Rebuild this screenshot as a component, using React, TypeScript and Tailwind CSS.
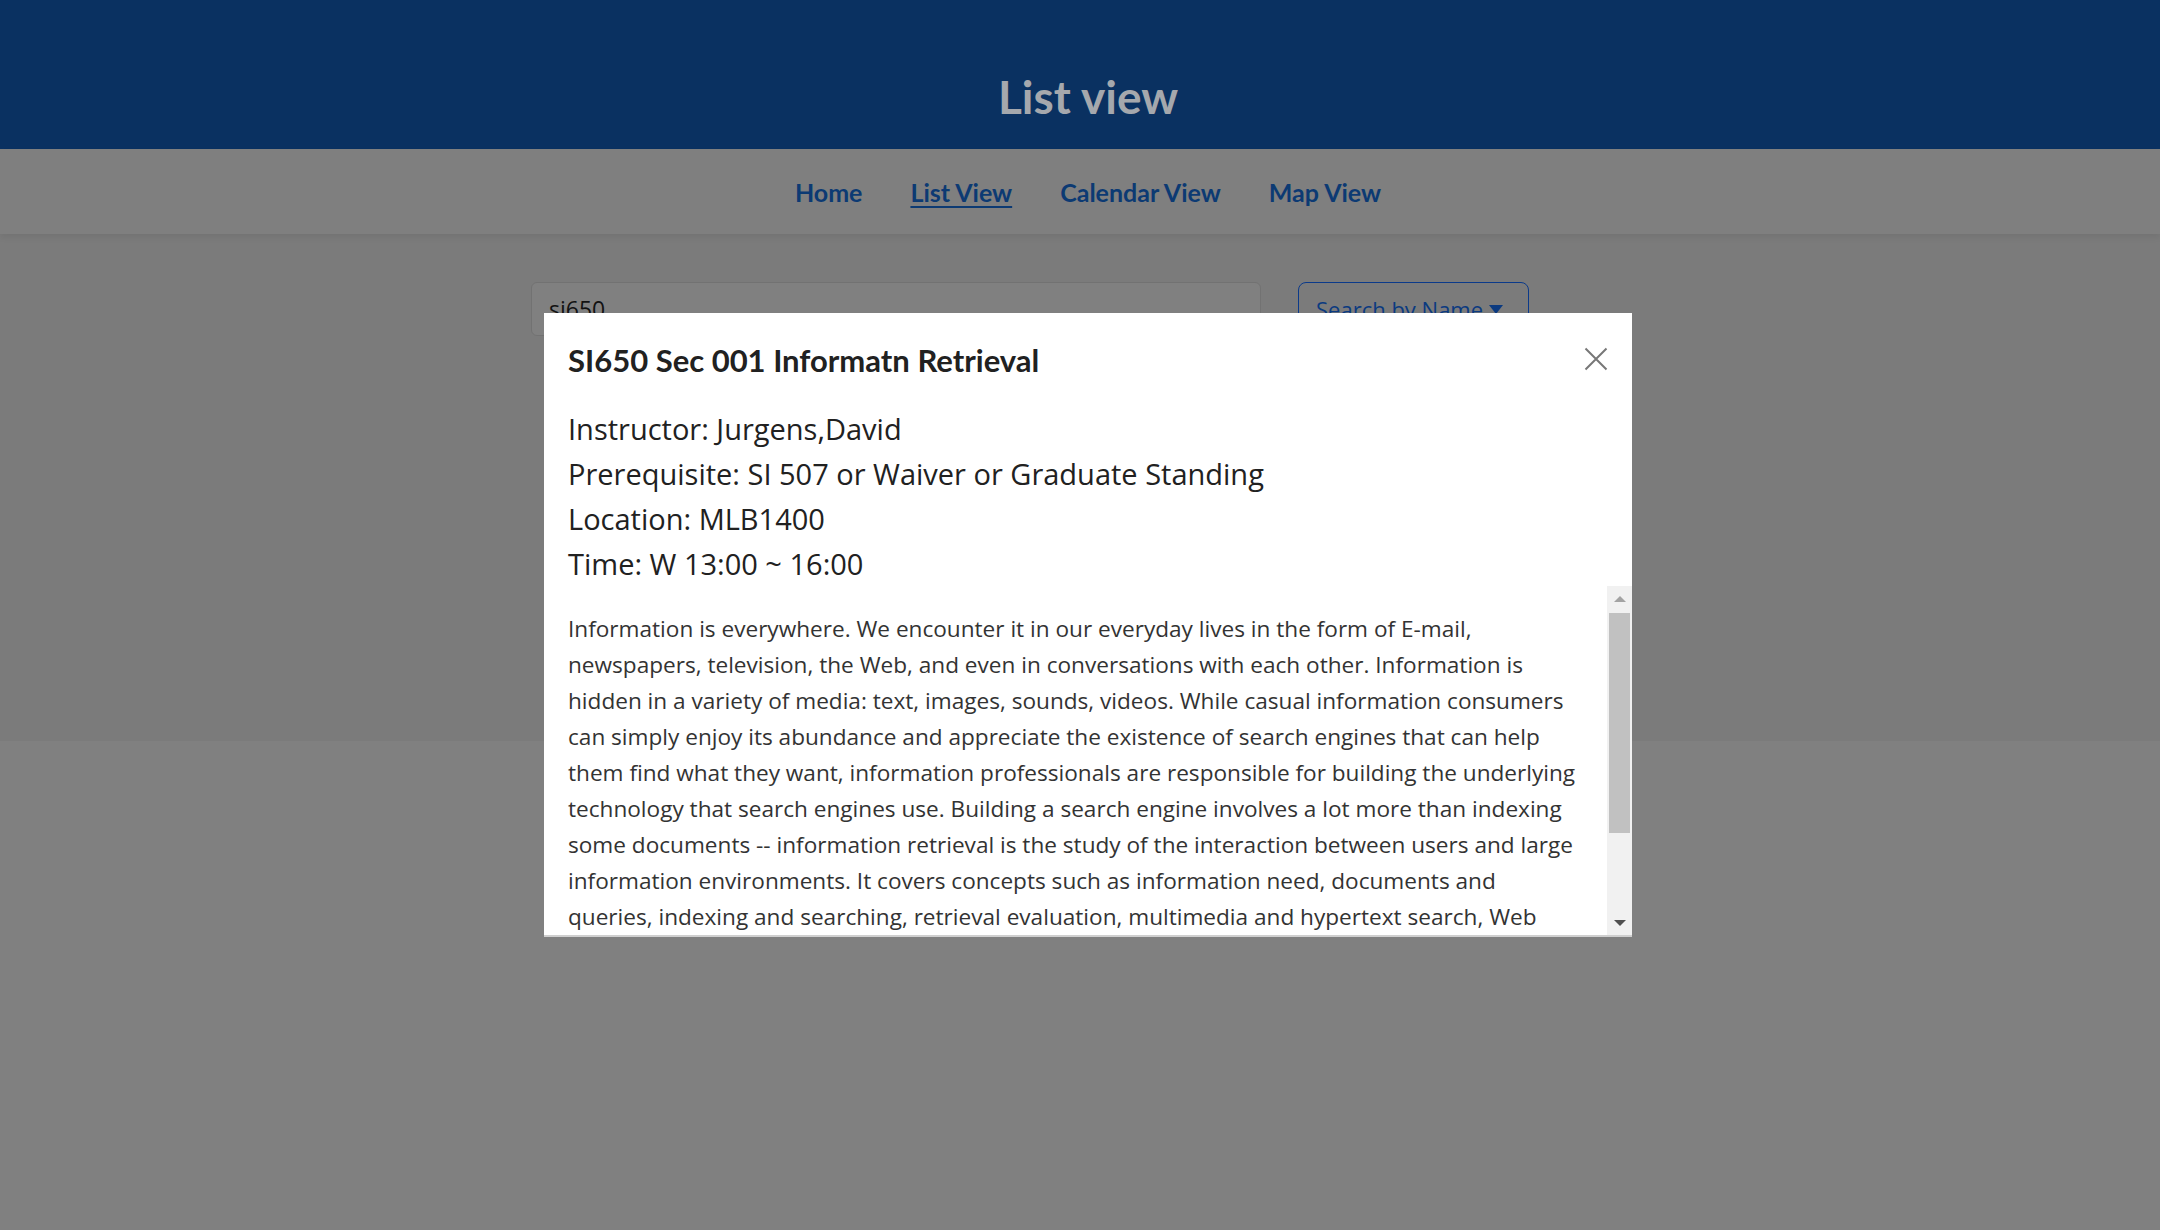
import React from "react";

const navItems = [
  { name: "Home", active: false },
  { name: "List View", active: true },
  { name: "Calendar View", active: false },
  { name: "Map View", active: false },
];

const details = [
  "Instructor: Jurgens,David",
  "Prerequisite: SI 507 or Waiver or Graduate Standing",
  "Location: MLB1400",
  "Time: W 13:00 ~ 16:00",
];

const descLines = [
  "Information is everywhere. We encounter it in our everyday lives in the form of E-mail,",
  "newspapers, television, the Web, and even in conversations with each other. Information is",
  "hidden in a variety of media: text, images, sounds, videos. While casual information consumers",
  "can simply enjoy its abundance and appreciate the existence of search engines that can help",
  "them find what they want, information professionals are responsible for building the underlying",
  "technology that search engines use. Building a search engine involves a lot more than indexing",
  "some documents -- information retrieval is the study of the interaction between users and large",
  "information environments. It covers concepts such as information need, documents and",
  "queries, indexing and searching, retrieval evaluation, multimedia and hypertext search, Web",
  "search, and information filtering and recommendation. Students will learn the theory and",
  "practice of building text retrieval systems and gain hands-on experience with open-source",
  "search engine toolkits.",
];

export default function App() {
  return (
    <div className="relative min-h-screen bg-[#808080] font-['Open_Sans',sans-serif]">
      {/* Header */}
      <header className="h-[149px] bg-[#0a3161] pl-4 pt-[69px] flex justify-center">
        <h1 className="font-['Lato',sans-serif] text-[46px] font-bold leading-[55px] text-[#a5a8ad]">
          List view
        </h1>
      </header>

      {/* Nav */}
      <nav className="relative z-10 h-[85px] bg-[#7f7f7f] pl-4 pt-[29px] flex justify-center gap-[48px] shadow-[0_4px_6px_rgba(0,0,0,0.06)] font-['Lato',sans-serif]">
        {navItems.map((item) => (
          <a
            key={item.name}
            className={
              "text-[25px] font-bold leading-[29px] text-[#0c3a73] " +
              (item.active ? "underline underline-offset-[4px] decoration-2" : "")
            }
          >
            {item.name}
          </a>
        ))}
      </nav>

      {/* Search area */}
      <section className="h-[507px] bg-[#7b7b7b] pl-4 pt-[48px]">
        <div className="mx-auto w-[1114px] flex gap-[37px]">
          <div className="w-[730px] h-[54px] rounded-[6px] border border-[#727272] bg-[#808080] px-[17px] flex items-center text-[23px] text-[#121212]">
            si650
          </div>
          <button className="w-[231px] h-[55px] rounded-[8px] border-[1.5px] border-[#0b3a8a] px-[17px] flex items-center whitespace-nowrap text-[22px] text-[#0b3a80]">
            Search by Name
            <span className="ml-[6px] inline-block border-t-[9px] border-x-[7px] border-x-transparent border-t-[#0b3a80]" />
          </button>
        </div>
      </section>

      {/* Modal */}
      <div className="absolute inset-0 pl-4 pt-[313px] flex justify-center">
        <div className="w-[1088px] h-[624px] bg-white border-b-2 border-[#cfcfcf] flex flex-col">
          <div className="flex justify-between items-start px-[24px] pt-[29px]">
            <h5 className="font-['Lato',sans-serif] text-[31px] font-bold leading-[36px] text-[#212121]">
              SI650 Sec 001 Informatn Retrieval
            </h5>
            <button className="mt-[5px] w-[24px] h-[24px]">
              <svg viewBox="0 0 24 24" width="24" height="24" fill="none" stroke="#777" strokeWidth="2">
                <path d="M1.5 1.5L22.5 22.5M22.5 1.5L1.5 22.5" />
              </svg>
            </button>
          </div>

          <div className="px-[24px] pt-[28px]">
            {details.map((d) => (
              <div key={d} className="text-[29px] leading-[45px] text-[#212121]">
                {d}
              </div>
            ))}
          </div>

          <div className="flex-1 min-h-0 flex">
            <div className="flex-1 overflow-hidden">
              <p className="pl-[24px] pt-[25px] pb-[24px] text-[22.6px] leading-[36px] text-[#333] whitespace-nowrap">
                {descLines.map((line, i) => (
                  <React.Fragment key={i}>
                    {line}
                    {i < descLines.length - 1 && <br />}
                  </React.Fragment>
                ))}
              </p>
            </div>
            {/* scrollbar */}
            <div className="w-[25px] bg-[#f1f1f1] flex flex-col">
              <div className="h-[25px] flex items-center justify-center">
                <span className="border-b-[6px] border-x-[6px] border-x-transparent border-b-[#a3a3a3]" />
              </div>
              <div className="flex-1 px-[2px] pt-[2px]">
                <div className="h-[220px] bg-[#c1c1c1]" />
              </div>
              <div className="h-[25px] flex items-center justify-center">
                <span className="border-t-[6px] border-x-[6px] border-x-transparent border-t-[#505050]" />
              </div>
            </div>
          </div>
        </div>
      </div>
    </div>
  );
}
